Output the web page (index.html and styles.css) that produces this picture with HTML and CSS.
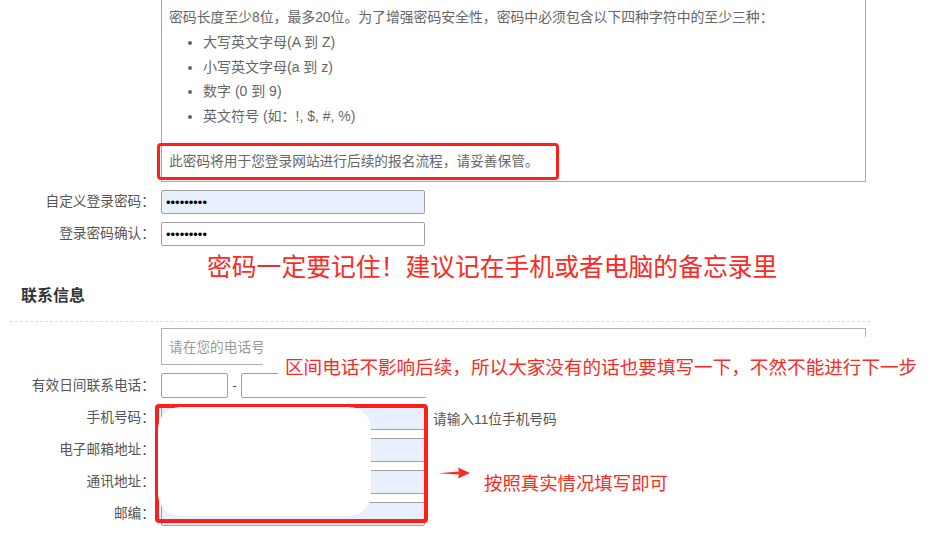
FILE: index.html
```html
<!DOCTYPE html>
<html lang="zh-CN">
<head>
<meta charset="utf-8">
<title>报名信息</title>
<link rel="stylesheet" href="styles.css">
</head>
<body>
<div class="page">
  <div class="pwd-tip">
    <p class="tip-intro">密码长度至少8位，最多20位。为了增强密码安全性，密码中必须包含以下四种字符中的至少三种：</p>
    <ul class="tip-list">
      <li>大写英文字母(A 到 Z)</li>
      <li>小写英文字母(a 到 z)</li>
      <li>数字 (0 到 9)</li>
      <li>英文符号 (如：!, $, #, %)</li>
    </ul>
    <p class="tip-note">此密码将用于您登录网站进行后续的报名流程，请妥善保管。</p>
  </div>

  <div class="form-rows">
    <div class="row">
      <label class="label">自定义登录密码：</label>
      <input class="field field-autofill" type="password" value="123456789">
    </div>
    <div class="row">
      <label class="label">登录密码确认：</label>
      <input class="field" type="password" value="123456789">
    </div>
  </div>

  <div class="big-note">密码一定要记住！建议记在手机或者电脑的备忘录里</div>

  <h3 class="section-title">联系信息</h3>

  <div class="form-rows contact">
    <div class="row">
      <span class="label"></span>
      <div class="hint-box">请在您的电话号码前加上区号</div>
    </div>
    <div class="row row-phone">
      <label class="label">有效日间联系电话：</label>
      <input class="field field-area" type="text">
      <span class="dash">-</span>
      <input class="field field-tel" type="text">
    </div>
    <div class="row">
      <label class="label">手机号码：</label>
      <input class="field field-autofill" type="text">
      <span class="hint">请输入11位手机号码</span>
    </div>
    <div class="row">
      <label class="label">电子邮箱地址：</label>
      <input class="field field-autofill" type="text">
    </div>
    <div class="row">
      <label class="label">通讯地址：</label>
      <input class="field field-autofill" type="text">
    </div>
    <div class="row">
      <label class="label">邮编：</label>
      <input class="field field-autofill" type="text">
    </div>
  </div>

  <div class="mark mark-note"></div>
  <div class="cover-phone">区间电话不影响后续，所以大家没有的话也要填写一下，不然不能进行下一步</div>
  <div class="mark mark-contact"></div>
  <div class="cover-blob"></div>
  <svg class="arrow" width="32" height="14" viewBox="0 0 32 14" aria-hidden="true">
    <path d="M0 7.2 L21 5.4 L20 1.5 L32 7 L20 12.5 L21 8.6 Z" fill="#fb2a24"/>
  </svg>
  <div class="fill-note">按照真实情况填写即可</div>
</div>
</body>
</html>
```

FILE: styles.css
```css
* { box-sizing: border-box; }

html, body {
  margin: 0;
  padding: 0;
  background: #fff;
}

body {
  font-family: "Liberation Sans", "Noto Sans CJK SC", sans-serif;
  font-size: 13.7px;
  color: #555;
}

.page {
  position: relative;
  width: 933px;
  height: 534px;
  overflow: hidden;
}

.pwd-tip {
  margin-left: 161px;
  width: 705px;
  border: 1px solid #a8a8a8;
  border-top: 0;
  padding: 8px 7px 10px;
  color: #666;
}

.tip-intro,
.tip-note {
  margin: 0;
  line-height: 18px;
}

.tip-intro {
  font-size: 13.85px;
}

.tip-list {
  margin: 4px 0 0;
  padding-left: 34px;
  list-style: disc;
}

.tip-list li {
  line-height: 24.5px;
  font-size: 14px;
}

.tip-note {
  margin-top: 25px;
}

.form-rows {
  display: flex;
  flex-direction: column;
  gap: 8px;
  margin-top: 8px;
}

.row {
  display: flex;
  align-items: center;
}

.label {
  width: 155px;
  flex: none;
  margin-right: 6px;
  text-align: right;
  color: #555;
  line-height: 18px;
}

.field {
  width: 264px;
  height: 24px;
  border: 1px solid #a0a0a0;
  border-radius: 2px;
  background: #fff;
  padding: 0 4px;
  font-size: 13px;
  color: #000;
  font-family: "Liberation Sans", sans-serif;
}

.field-autofill {
  background: #e8f0fe;
}

.big-note {
  margin: 8px 0 0 207px;
  font-size: 24.8px;
  line-height: 28px;
  color: #fb2a24;
  white-space: nowrap;
}

.section-title {
  margin: 0 63px 0 10px;
  padding: 4px 11px 15px;
  border-bottom: 1px dashed #ddd;
  font-size: 16px;
  line-height: 20px;
  font-weight: bold;
  color: #333;
}

.contact {
  margin-top: 6px;
}

.hint-box {
  width: 705px;
  height: 37px;
  border: 1px solid #b0b0b0;
  padding: 0 7px;
  line-height: 37px;
  color: #999;
  white-space: nowrap;
  overflow: hidden;
}

.row-phone .field {
  height: 25px;
}

.field-area {
  width: 67px;
  background: #fff;
}

.dash {
  width: 13px;
  text-align: center;
  color: #555;
}

.field-tel {
  width: 186px;
}

.hint {
  margin-left: 8px;
  color: #555;
}

/* annotations drawn over the screenshot */
.mark {
  position: absolute;
  border: 3px solid #ff1f1a;
  border-radius: 4px;
}

.mark-note {
  left: 157px;
  top: 143px;
  width: 402px;
  height: 37px;
}

.mark-contact {
  left: 155px;
  top: 404px;
  width: 273px;
  height: 119px;
  border-width: 4px;
}

.cover-phone {
  position: absolute;
  left: 263px;
  top: 337px;
  width: 670px;
  height: 60px;
  background: #fff;
  padding: 19px 0 0 22px;
  font-size: 18.6px;
  line-height: 24px;
  color: #fb2a24;
  white-space: nowrap;
  clip-path: polygon(0 0, 100% 0, 100% 100%, 15px 100%, 15px 36px, 0 28px);
}

.cover-blob {
  position: absolute;
  left: 158px;
  top: 407px;
  width: 213px;
  height: 109px;
  background: #fff;
  border-radius: 22px;
}

.arrow {
  position: absolute;
  left: 438px;
  top: 466px;
}

.fill-note {
  position: absolute;
  left: 484px;
  top: 472px;
  font-size: 18.4px;
  line-height: 24px;
  color: #fb2a24;
  white-space: nowrap;
}
```
